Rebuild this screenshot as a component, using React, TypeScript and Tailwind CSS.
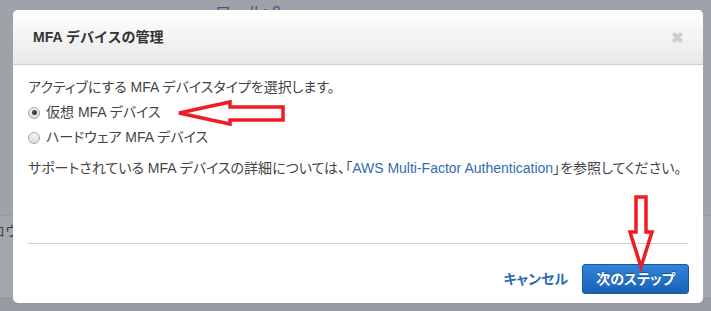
import React from 'react';

const font = "font-['Liberation_Sans','Noto_Sans_CJK_JP',sans-serif]";

function Radio({ checked }: { checked?: boolean }) {
  return (
    <span className="flex h-[12px] w-[12px] items-center justify-center rounded-full border border-[#a8a8a8] bg-gradient-to-b from-[#f4f4f4] to-[#dcdcdc]">
      {checked && <span className="h-[5px] w-[5px] rounded-full bg-[#444]" />}
    </span>
  );
}

export default function App() {
  return (
    <div className={`relative h-[311px] w-[711px] overflow-hidden bg-[#9da3a9] ${font}`}>
      {/* page behind the overlay */}
      <div className="h-[10px] overflow-visible pl-[215px] text-[16px] leading-[20px] text-[#3a5d88]">
        <div className="mt-[3px]">ロール: 0</div>
      </div>
      <div className="mt-[202px] h-[83px] border-y border-[#949aa0] bg-[#a2a8ae] text-[14px] text-[#3c4248]">
        <div className="ml-[-9px] mt-[5px]">ロウ</div>
      </div>
      <div className="h-full bg-[#959ba1]" />

      {/* modal */}
      <div className="absolute left-[13px] top-[10px] flex h-[293px] w-[690px] flex-col rounded-[5px] bg-white">
        <div className="flex h-[55px] shrink-0 items-center justify-between rounded-t-[5px] border-b border-[#cfcfcf] bg-gradient-to-b from-white to-[#e9e9e9] pl-[20px] pr-[19px]">
          <span className="text-[14px] font-bold text-[#333]">MFA デバイスの管理</span>
          <span className="text-[15px] font-bold leading-none text-[#cdcdcd]">✖</span>
        </div>

        <div className="px-[15px] pt-[10px] text-[14px] text-[#444] [font-feature-settings:'palt']">
          <p className="h-[25px] leading-[25px]">アクティブにする MFA デバイスタイプを選択します。</p>
          <label className="flex h-[25px] items-center gap-[6px]">
            <Radio checked />
            <span>仮想 MFA デバイス</span>
          </label>
          <label className="flex h-[25px] items-center gap-[6px]">
            <Radio />
            <span>ハードウェア MFA デバイス</span>
          </label>
          <p className="mt-[6px] h-[25px] leading-[25px]">
            サポートされている MFA デバイスの詳細については、「
            <a className="text-[#2f6db5]">AWS Multi-Factor Authentication</a>
            」を参照してください。
          </p>
          <div className="mt-[62px] h-px bg-[#cccccc]" />
        </div>

        <div className="flex items-center justify-end gap-[14px] px-[14px] pt-[20px] [font-feature-settings:'palt']">
          <a className="text-[14px] font-bold text-[#2a6cb6]">キャンセル</a>
          <button className="h-[30px] w-[107px] rounded-[3px] border border-[#1a58a6] bg-gradient-to-b from-[#2f84da] to-[#1a62b6] text-[14px] font-bold text-white [text-shadow:0_-1px_0_rgba(0,0,0,0.35)]">
            次のステップ
          </button>
        </div>
      </div>

      {/* red annotation arrows */}
      <svg className="pointer-events-none absolute left-0 top-0" width="711" height="311">
        <polygon
          points="179,113 230,102 230,107 283,107 283,120 230,120 230,124"
          fill="none"
          stroke="#ee1c24"
          strokeWidth="3.5"
          strokeLinejoin="miter"
        />
        <polygon
          points="636,197 646,197 646,232 652,232 641,267 630,232 636,232"
          fill="none"
          stroke="#ee1c24"
          strokeWidth="3.5"
          strokeLinejoin="miter"
        />
      </svg>
    </div>
  );
}
